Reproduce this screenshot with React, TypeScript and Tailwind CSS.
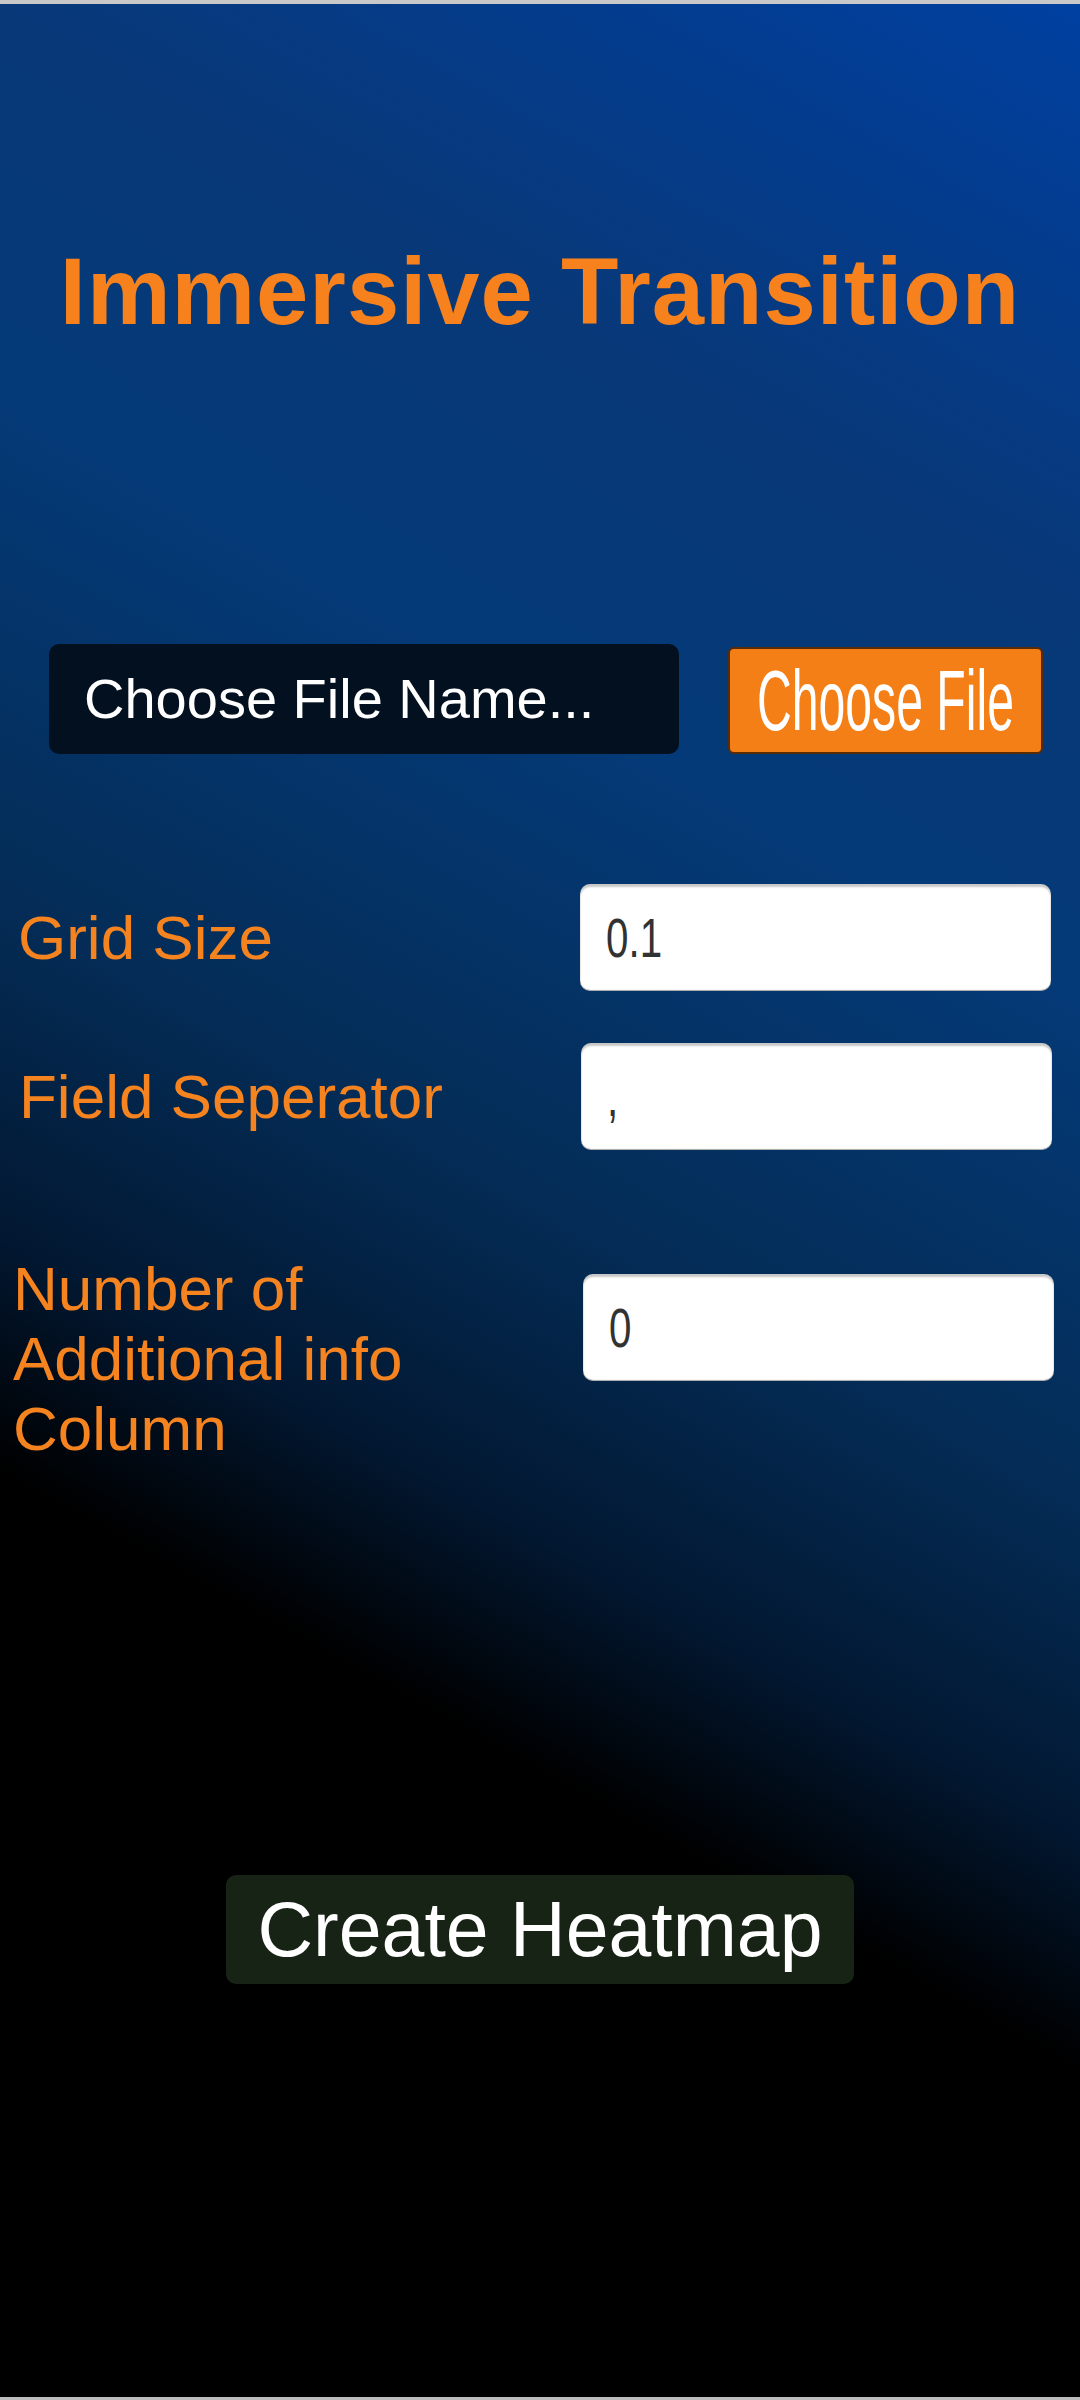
import React from "react";

const font = { fontFamily: '"Liberation Sans", Arial, sans-serif' };

function Field({ value, extra = "" }: { value: string; extra?: string }) {
  return (
    <div
      className={`flex h-[107px] w-[471px] items-center rounded-[10px] bg-white pl-[26px] shadow-[inset_0_3px_2px_rgba(0,0,0,0.22),inset_0_-1px_1px_rgba(0,0,0,0.35)] ${extra}`}
    >
      <span className="inline-block origin-left scale-x-[0.72] text-[56px] leading-none text-[#323232]">
        {value}
      </span>
    </div>
  );
}

export default function App() {
  return (
    <div
      style={font}
      className="flex h-[2400px] w-full flex-col overflow-hidden border-t-4 border-b-[3px] border-t-[#c9c9c9] border-b-[#bdbdbd] bg-[linear-gradient(209deg,#0040a0_0%,#083878_20%,#043a78_33%,#042c56_50%,#021832_61%,#000000_69%,#000000_100%)]"
    >
      <h1 className="mt-[241px] text-center text-[94px] font-bold leading-[94px] tracking-[1px] text-[#f7811c]">
        Immersive Transition
      </h1>

      <div className="mt-[305px] flex items-start pl-[49px]">
        <div className="flex h-[110px] w-[630px] items-center rounded-[10px] bg-[#03101f] pl-[35px] text-[56px] leading-none text-white">
          Choose File Name...
        </div>
        <div className="ml-[49px] mt-[3px] flex h-[107px] w-[315px] items-center justify-center rounded-[6px] border-2 border-[#5a2c06] bg-[#f57f17] pb-[2px]">
          <span className="inline-block shrink-0 scale-x-[0.56] whitespace-nowrap text-[86px] leading-none text-white">
            Choose File
          </span>
        </div>
      </div>

      <div className="mt-[130px] flex items-center">
        <div className="w-[580px] pl-[18px] text-[62px] leading-none text-[#f5831f]">Grid Size</div>
        <Field value="0.1" />
      </div>

      <div className="mt-[52px] flex items-center">
        <div className="w-[581px] pl-[19px] text-[62px] leading-none text-[#f5831f]">Field Seperator</div>
        <Field value="," />
      </div>

      <div className="mt-[104px] flex items-start">
        <div className="w-[583px] pl-[13px] text-[62px] leading-[70px] text-[#f5831f]">
          Number of
          <br />
          Additional info
          <br />
          Column
        </div>
        <Field value="0" extra="mt-[20px]" />
      </div>

      <div className="mt-[411px] flex justify-center">
        <div className="flex h-[109px] w-[628px] items-center justify-center rounded-[10px] bg-[#172314] text-[77px] leading-none text-white">
          Create Heatmap
        </div>
      </div>
    </div>
  );
}
